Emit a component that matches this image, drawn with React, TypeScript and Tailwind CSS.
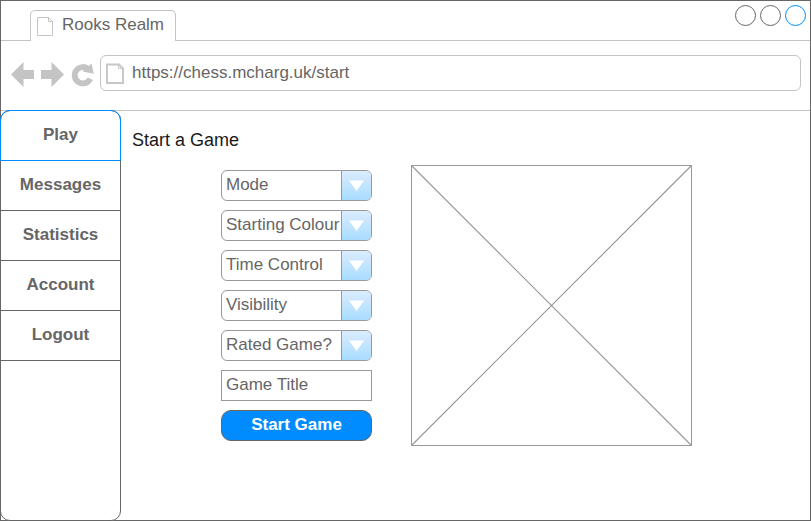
import React from "react";

const navItems = ["Messages", "Statistics", "Account", "Logout"];
const selects = ["Mode", "Starting Colour", "Time Control", "Visibility", "Rated Game?"];

function TabStrip() {
  return (
    <div className="flex h-10 shrink-0">
      <div className="w-[29px] border-b border-[#c4c4c4]" />
      <div className="mt-[9px] flex w-[146px] rounded-t-[5px] border border-b-0 border-[#c4c4c4]">
        <svg className="mt-1.5 ml-1.5 shrink-0" width="17" height="20" viewBox="0 0 17 20" fill="none" stroke="#c4c4c4">
          <path d="M.5.5H11.5L15.5 4.5V18.5H.5ZM11.5.5V4.5H15.5" />
        </svg>
        <span className="mt-1 ml-2 text-[17px] leading-5 whitespace-nowrap">Rooks Realm</span>
      </div>
      <div className="flex flex-1 justify-end gap-1 border-b border-[#c4c4c4] pt-1 pr-1">
        <div className="size-[21px] rounded-full border border-[#666]" />
        <div className="size-[21px] rounded-full border border-[#666]" />
        <div className="size-[21px] rounded-full border border-[#008cff]" />
      </div>
    </div>
  );
}

function Toolbar() {
  return (
    <div className="flex h-[70px] shrink-0 border-b border-[#c4c4c4] pr-[9px]">
      <svg className="mt-[18px] ml-2.5 shrink-0" width="89" height="32" viewBox="11 59 89 32" fill="#c4c4c4">
        <path d="M11 74.500L23.500 62V70H34V79H23.500V87Z" />
        <path d="M64 74.500L51.500 62V70H41V79H51.500V87Z" />
        <path d="M90.300 78.800A8.200 8.200 0 1 1 88.600 69.300" fill="none" stroke="#c4c4c4" strokeWidth="5.800" />
        <path d="M91.600 63.500L93.800 73.700L82.500 71.600Z" />
      </svg>
      <div className="mt-3.5 flex h-9 flex-1 rounded-[6px] border border-[#c4c4c4]">
        <svg className="mt-[7px] ml-[5px] shrink-0" width="18" height="22" viewBox="0 0 18 22" fill="none" stroke="#c8c8c8">
          <path d="M1 1.500H13L17 5.500V20H1Z" strokeWidth="2" />
          <path d="M12.500 1.500V5.500H17" />
        </svg>
        <span className="mt-[7px] ml-2 text-[17px] leading-5">https://chess.mcharg.uk/start</span>
      </div>
    </div>
  );
}

function Sidebar() {
  return (
    <nav className="-mt-px -mb-px -ml-px flex w-[121px] shrink-0 flex-col rounded-[10px] border border-[#666] bg-white text-center text-[17px] leading-5 font-bold">
      <div className="-mx-px -mt-px h-[51px] rounded-t-[10px] border border-[#008cff] pt-3.5">Play</div>
      {navItems.map((item) => (
        <div key={item} className="h-[50px] border-b border-[#666] pt-3.5">{item}</div>
      ))}
    </nav>
  );
}

function SelectBox({ label }: { label: string }) {
  return (
    <div className="flex h-[31px] overflow-hidden rounded-[6px] border border-[#999]">
      <span className="w-[119px] pt-1 pl-1 leading-5 whitespace-nowrap">{label}</span>
      <div className="flex w-[30px] justify-center border-l border-[#999] bg-linear-to-b from-[#dbecff] to-[#a8dcff] pt-[9px]">
        <svg width="15" height="11" viewBox="0 0 15 11" fill="white"><path d="M0 .5H15L7.500 11Z" /></svg>
      </div>
    </div>
  );
}

export default function App() {
  return (
    <div className="flex h-[521px] w-[811px] flex-col border border-[#666] bg-white font-['Liberation_Sans',Arial,sans-serif] text-[#666]">
      <TabStrip />
      <Toolbar />
      <div className="flex min-h-0 flex-1">
        <Sidebar />
        <main className="flex-1 pt-[19px] pl-[11px]">
          <h1 className="text-lg leading-5 text-[#1a1a1a]">Start a Game</h1>
          <div className="mt-[15px] ml-[89px] flex">
            <div className="mt-[5px] flex w-[151px] flex-col gap-[9px] text-[17px]">
              {selects.map((label) => <SelectBox key={label} label={label} />)}
              <div className="h-[31px] border border-[#999] pt-1 pl-1 leading-5">Game Title</div>
              <button className="flex h-[31px] justify-center rounded-[10px] border border-[#666] bg-[#008cff] pt-1 leading-5 font-bold text-white">Start Game</button>
            </div>
            <svg className="ml-[39px] shrink-0" width="281" height="281" viewBox="0 0 281 281" fill="none" stroke="#999">
              <path d="M.5.5H280.500V280.500H.5Z" />
              <path d="M.5.5L280.500 280.500M280.500.5L.5 280.500" stroke="#999" strokeWidth="1.200" />
            </svg>
          </div>
        </main>
      </div>
    </div>
  );
}
